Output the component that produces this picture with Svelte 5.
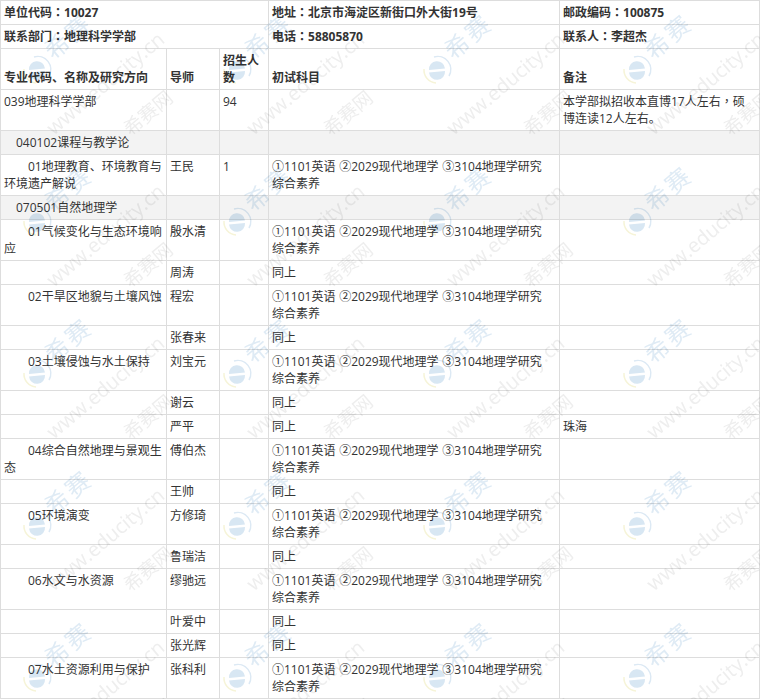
<script>
	const exam = '①1101英语 ②2029现代地理学 ③3104地理学研究综合素养';
	const same = '同上';

	// indent: 0 none, 1 department section, 2 direction
	const rows = [
		{ name: '039地理科学学部', tutor: '', count: '94', subjects: '', note: ['本学部拟招收本直博17人左右', '硕博连读12人左右。'] },
		{ name: '040102课程与教学论', indent: 1, shade: true },
		{ name: '01地理教育、环境教育与环境遗产解说', indent: 2, tutor: '王民', count: '1', subjects: exam },
		{ name: '070501自然地理学', indent: 1, shade: true },
		{ name: '01气候变化与生态环境响应', indent: 2, tutor: '殷水清', subjects: exam },
		{ tutor: '周涛', subjects: same },
		{ name: '02干旱区地貌与土壤风蚀', indent: 2, tutor: '程宏', subjects: exam },
		{ tutor: '张春来', subjects: same },
		{ name: '03土壤侵蚀与水土保持', indent: 2, tutor: '刘宝元', subjects: exam },
		{ tutor: '谢云', subjects: same },
		{ tutor: '严平', subjects: same, note: ['珠海'] },
		{ name: '04综合自然地理与景观生态', indent: 2, tutor: '傅伯杰', subjects: exam },
		{ tutor: '王帅', subjects: same },
		{ name: '05环境演变', indent: 2, tutor: '方修琦', subjects: exam },
		{ tutor: '鲁瑞洁', subjects: same },
		{ name: '06水文与水资源', indent: 2, tutor: '缪驰远', subjects: exam },
		{ tutor: '叶爱中', subjects: same },
		{ tutor: '张光辉', subjects: same },
		{ name: '07水土资源利用与保护', indent: 2, tutor: '张科利', subjects: exam }
	];

	// watermark repeats every 200 x 152
	const marks = [];
	for (let y = -82; y < 760; y += 152) {
		for (let x = -163; x < 800; x += 200) {
			marks.push({ x, y });
		}
	}
</script>

<div class="page">
	<table>
		<colgroup>
			<col class="c1" />
			<col class="c2" />
			<col class="c3" />
			<col class="c4" />
			<col class="c5" />
		</colgroup>
		<tbody>
			<tr class="info">
				<td colspan="3">单位代码<span class="mid">：</span>10027</td>
				<td>地址<span class="mid">：</span>北京市海淀区新街口外大街19号</td>
				<td>邮政编码<span class="mid">：</span>100875</td>
			</tr>
			<tr class="info">
				<td colspan="3">联系部门<span class="mid">：</span>地理科学学部</td>
				<td>电话<span class="mid">：</span>58805870</td>
				<td>联系人<span class="mid">：</span>李超杰</td>
			</tr>
			<tr class="head">
				<td>专业代码、名称及研究方向</td>
				<td>导师</td>
				<td>招生人数</td>
				<td>初试科目</td>
				<td>备注</td>
			</tr>
			{#each rows as row}
				<tr class:shade={row.shade}>
					<td class="indent{row.indent ?? 0}">{row.name ?? ''}</td>
					<td>{row.tutor ?? ''}</td>
					<td>{row.count ?? ''}</td>
					<td class="subjects">{row.subjects ?? ''}</td>
					<td>
						{#each row.note ?? [] as part, i}{#if i > 0}<span class="mid">，</span>{/if}{part}{/each}
					</td>
				</tr>
			{/each}
		</tbody>
	</table>

	<svg class="watermark" width="760" height="699" aria-hidden="true">
		{#each marks as m}
			<g transform="translate({m.x} {m.y})">
				<path class="ring-blue" d="M-3 -13A13 13 0 0 1 12 6" />
				<path class="ring-yellow" d="M-13 -1A13 13 0 0 0 -1 13" />
				<path class="disc" d="M-8 0A8 8 0 0 1 8 -1.5L-8 0ZM-8 2.5L8 1A8 8 0 0 1 -8 2.5Z" />
				<text class="brand" transform="translate(31 -34) rotate(-40)">希赛</text>
				<text class="url" transform="translate(68 13) rotate(-40)">www.educity.cn</text>
				<text class="brand-grey" transform="translate(111 43) rotate(-40)">希赛网</text>
			</g>
		{/each}
	</svg>
</div>

<style>
	:global(body) {
		background: #fff;
	}
	.page {
		position: relative;
		width: 760px;
		height: 699px;
		overflow: hidden;
		font-family: "Open Sans", "Noto Sans CJK SC", sans-serif;
		font-size: 12px;
		line-height: 17px;
		color: #333;
	}
	table {
		width: 760px;
		table-layout: fixed;
		border-collapse: collapse;
	}
	.c1 { width: 166px; }
	.c2 { width: 53px; }
	.c3 { width: 49px; }
	.c4 { width: 291px; }
	.c5 { width: 200px; }
	td {
		padding: 3px;
		border: 1px solid #ddd;
		vertical-align: top;
	}
	td.subjects {
		padding-right: 12px;
		word-spacing: 0.6px;
	}
	.info td {
		font-weight: 700;
	}
	.head td {
		vertical-align: bottom;
		font-weight: 700;
	}
	.shade td {
		background: #f3f3f3;
	}
	.indent1 {
		text-indent: 12px;
	}
	.indent2 {
		text-indent: 24px;
	}
	/* colon and comma sit centred in the em box in the source font */
	.mid {
		font-family: "Noto Sans CJK TC", sans-serif;
		line-height: 0;
	}
	.watermark {
		position: absolute;
		top: 0;
		left: 0;
		pointer-events: none;
		mix-blend-mode: multiply;
		filter: blur(0.4px);
	}
	.ring-blue,
	.ring-yellow {
		fill: none;
		stroke-width: 1.5;
	}
	.ring-blue {
		stroke: #dce9f4;
	}
	.ring-yellow {
		stroke: #f6f4d8;
	}
	.disc {
		fill: #d8e7f3;
	}
	text {
		text-anchor: middle;
		dominant-baseline: central;
	}
	.brand {
		font-size: 24px;
		letter-spacing: 3px;
		fill: #dfebf5;
	}
	.url {
		font-size: 20px;
		fill: #eeeeee;
	}
	.brand-grey {
		font-size: 19px;
		fill: #eeeeee;
	}
</style>
